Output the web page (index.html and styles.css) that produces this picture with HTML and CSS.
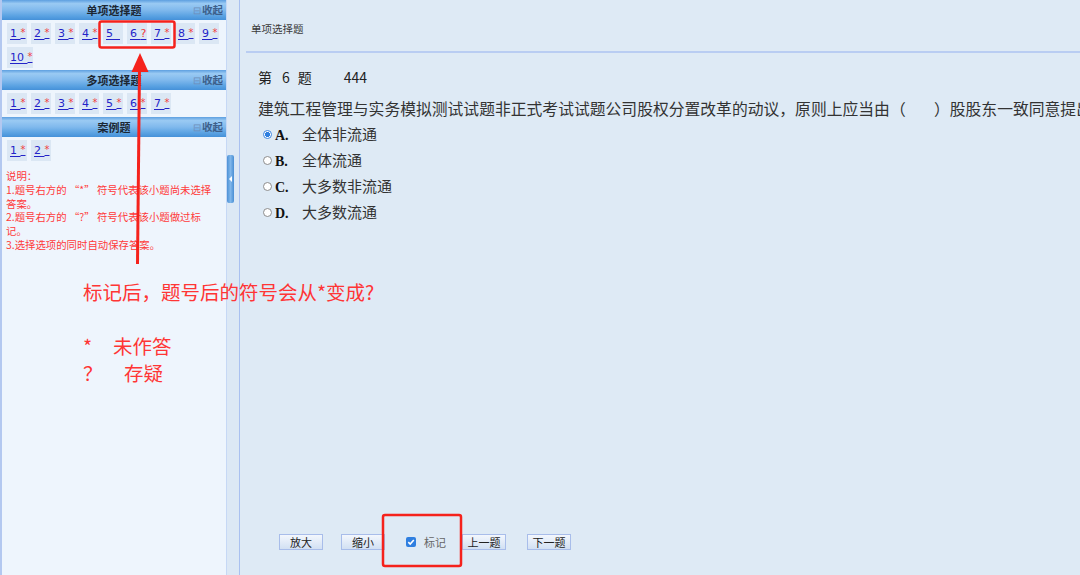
FILE: index.html
```html
<!DOCTYPE html>
<html lang="zh-CN">
<head>
<meta charset="utf-8">
<title>单项选择题</title>
<link rel="stylesheet" href="styles.css">
</head>
<body>
<div class="page">
  <aside class="side">
    <section class="group">
      <div class="group-head"><span class="group-title">单项选择题</span><span class="fold"><span class="fold-ico">⊟</span>收起</span></div>
      <div class="nums">
        <a class="num">1 <span class="star">*</span></a>
        <a class="num">2 <span class="star">*</span></a>
        <a class="num">3 <span class="star">*</span></a>
        <a class="num">4 <span class="star">*</span></a>
        <a class="num">5&nbsp;&nbsp;</a>
        <a class="num">6 <span class="qm">?</span></a>
        <a class="num">7 <span class="star">*</span></a>
        <a class="num">8 <span class="star">*</span></a>
        <a class="num">9 <span class="star">*</span></a>
        <a class="num">10 <span class="star">*</span></a>
      </div>
    </section>
    <section class="group">
      <div class="group-head"><span class="group-title">多项选择题</span><span class="fold"><span class="fold-ico">⊟</span>收起</span></div>
      <div class="nums">
        <a class="num">1 <span class="star">*</span></a>
        <a class="num">2 <span class="star">*</span></a>
        <a class="num">3 <span class="star">*</span></a>
        <a class="num">4 <span class="star">*</span></a>
        <a class="num">5 <span class="star">*</span></a>
        <a class="num">6 <span class="star">*</span></a>
        <a class="num">7 <span class="star">*</span></a>
      </div>
    </section>
    <section class="group">
      <div class="group-head"><span class="group-title">案例题</span><span class="fold"><span class="fold-ico">⊟</span>收起</span></div>
      <div class="nums">
        <a class="num">1 <span class="star">*</span></a>
        <a class="num">2 <span class="star">*</span></a>
      </div>
    </section>
    <div class="note">
      <p>说明：</p>
      <p>1.题号右方的 “*” 符号代表该小题尚未选择答案。</p>
      <p>2.题号右方的 “?” 符号代表该小题做过标记。</p>
      <p>3.选择选项的同时自动保存答案。</p>
    </div>
  </aside>

  <div class="splitter"><div class="handle"><span class="handle-arrow"></span></div></div>

  <main class="main">
    <div class="crumb">单项选择题</div>
    <div class="qhead"><span>第</span><span class="qno">6</span><span>题</span><span class="qcode">444</span></div>
    <div class="qtext">建筑工程管理与实务模拟测试试题非正式考试试题公司股权分置改革的动议，原则上应当由（&nbsp;&nbsp;&nbsp;&nbsp;&nbsp;&nbsp;&nbsp;&nbsp;）股股东一致同意提出</div>
    <ul class="opts">
      <li class="opt"><span class="radio checked"></span><span class="letter">A.</span><span>全体非流通</span></li>
      <li class="opt"><span class="radio"></span><span class="letter">B.</span><span>全体流通</span></li>
      <li class="opt"><span class="radio"></span><span class="letter">C.</span><span>大多数非流通</span></li>
      <li class="opt"><span class="radio"></span><span class="letter">D.</span><span>大多数流通</span></li>
    </ul>
    <div class="bar">
      <button class="btn">放大</button>
      <button class="btn btn-gap">缩小</button>
      <label class="mark"><span class="check"><svg viewBox="0 0 10 10" width="10" height="10"><path d="M2.3 5.2 L4.2 7 L7.8 3" fill="none" stroke="#fff" stroke-width="1.6"/></svg></span><span class="mark-text">标记</span></label>
      <button class="btn btn-gap">上一题</button>
      <button class="btn">下一题</button>
    </div>
  </main>

  <div class="annot">
    <svg class="annot-svg" width="1080" height="575" viewBox="0 0 1080 575">
      <rect x="99.5" y="21.5" width="75" height="26" rx="2" fill="none" stroke="#f5221c" stroke-width="2.5"/>
      <rect x="383" y="515" width="78" height="51" rx="2" fill="none" stroke="#f5221c" stroke-width="2.5"/>
      <line x1="137.5" y1="264" x2="139.5" y2="68" stroke="#f5221c" stroke-width="3"/>
      <polygon points="140,53 131.5,72 148.5,72" fill="#f5221c"/>
    </svg>
    <div class="annot-text annot-main">标记后，题号后的符号会从*变成?</div>
    <div class="annot-text annot-l1"><span class="sym">*</span>未作答</div>
    <div class="annot-text annot-l2"><span class="sym2">？</span>存疑</div>
  </div>
</div>
</body>
</html>
```

FILE: styles.css
```css
* { box-sizing: border-box; }
html, body { margin: 0; padding: 0; }
body {
  width: 1080px;
  height: 575px;
  overflow: hidden;
  font-family: "Noto Sans CJK SC", "Liberation Sans", sans-serif;
  background: #dfeaf5;
}
.page {
  position: relative;
  display: flex;
  width: 1080px;
  height: 575px;
}

/* ---------- side panel ---------- */
.side {
  width: 227px;
  flex: none;
  background: #eef5fd;
  border-left: 2px solid #b3c8f0;
  border-right: 1px solid #c6d8f5;
}
.group-head {
  position: relative;
  height: 20px;
  display: flex;
  align-items: center;
  justify-content: center;
  background: linear-gradient(to bottom, #5d9fe0 0%, #9acaf3 18%, #80b9ed 50%, #5aa2e2 80%, #4591d9 100%);
}
.group-title {
  font-size: 11px;
  font-weight: bold;
  color: #1c2733;
  line-height: 20px;
}
.fold {
  position: absolute;
  right: 3px;
  top: 0;
  line-height: 20px;
  font-size: 10.5px;
  font-weight: bold;
  color: #3d5f8a;
}
.fold-ico {
  color: #6f8fba;
  font-weight: normal;
  font-size: 10px;
  margin-right: 1px;
}
.nums {
  display: flex;
  flex-wrap: wrap;
  gap: 3px 4px;
  padding: 3px 0 2px 5px;
}
.num {
  display: flex;
  align-items: flex-start;
  min-width: 20px;
  height: 21px;
  padding: 3px 0 0 3px;
  background: #dbe7f4;
  color: #2323c8;
  text-decoration: underline;
  text-underline-offset: 2px;
  font-family: "DejaVu Sans", "Liberation Sans", sans-serif;
  font-size: 11px;
  line-height: 15px;
  white-space: pre;
}
.group + .group .nums { padding-bottom: 3px; }
.star {
  color: #f03c3c;
  font-size: 10px;
  line-height: 13px;
}
.qm {
  color: #f03c3c;
  font-size: 11px;
}
.note {
  padding: 5px 4px 0 4px;
  width: 218px;
  color: #ff3a3a;
  font-size: 10.4px;
  line-height: 13.8px;
}
.note p { margin: 0; }

/* ---------- splitter ---------- */
.splitter {
  width: 13px;
  flex: none;
  border-right: 1px solid #a9c0f0;
  background: #dce8f5;
  padding-top: 155px;
}
.handle {
  position: relative;
  width: 7px;
  height: 48px;
  border-radius: 2px;
  background: linear-gradient(to right, #4e92d6, #7fb6ea 50%, #4a8fd4);
}
.handle-arrow {
  position: absolute;
  left: 2px;
  top: 21px;
  width: 0;
  height: 0;
  border-top: 3px solid transparent;
  border-bottom: 3px solid transparent;
  border-right: 3px solid #ffffff;
}

/* ---------- main ---------- */
.main {
  flex: 1;
  min-width: 0;
  display: flex;
  flex-direction: column;
  overflow: hidden;
  padding-left: 6px;
  background: #deeaf5;
}
.crumb {
  height: 53px;
  padding: 22px 0 0 5px;
  font-size: 10.5px;
  line-height: 14px;
  color: #3a3a3a;
  border-bottom: 2px solid #b9cdf2;
}
.qhead {
  margin: 14px 0 0 12px;
  font-size: 14px;
  line-height: 20px;
  color: #222;
  display: flex;
}
.qno { margin: 0 8px 0 10px; }
.qcode { margin-left: 32px; }
.qtext {
  margin: 11px 0 0 12px;
  font-size: 15.8px;
  line-height: 22px;
  color: #333;
  white-space: nowrap;
}
.opts {
  list-style: none;
  margin: 1px 0 0 17px;
  padding: 0;
}
.opt {
  display: flex;
  align-items: baseline;
  height: 26px;
  line-height: 26px;
  font-size: 15px;
  color: #333;
}
.radio {
  align-self: center;
  width: 9px;
  height: 9px;
  border-radius: 50%;
  border: 1px solid #8d8d8d;
  background: #fff;
  margin-right: 3px;
  flex: none;
}
.radio.checked {
  border-color: #3f86e0;
  background: radial-gradient(circle, #2f7fe0 0 2.3px, #fff 2.8px);
}
.letter {
  width: 27px;
  font-family: "Liberation Serif", serif;
  font-weight: bold;
  font-size: 14px;
  color: #111;
  flex: none;
}
.bar {
  margin-top: auto;
  margin-bottom: 25px;
  padding-left: 33px;
  display: flex;
  align-items: center;
  height: 17px;
}
.btn {
  height: 16px;
  padding: 0;
  width: 44px;
  border: 1px solid #a8bdea;
  background: linear-gradient(to bottom, #f3f7fd, #d2e0f3);
  font-family: "Noto Sans CJK SC", sans-serif;
  font-size: 11px;
  line-height: 14px;
  color: #222;
  margin-right: 18px;
}
.btn-gap { margin-right: 21px; }
.mark {
  display: flex;
  align-items: center;
  margin-right: 16px;
}
.check {
  width: 10px;
  height: 10px;
  border-radius: 2px;
  background: #2f7fe0;
  display: flex;
  margin-right: 8px;
}
.mark-text {
  font-size: 11px;
  color: #666;
}
.bar .btn:last-child { margin-right: 0; }

/* ---------- annotations (overlay) ---------- */
.annot {
  position: absolute;
  left: 0;
  top: 0;
  width: 1080px;
  height: 575px;
  pointer-events: none;
}
.annot-svg { position: absolute; left: 0; top: 0; }
.annot-text {
  position: absolute;
  left: 83px;
  color: #ff3535;
  font-size: 19.5px;
  line-height: 24px;
  white-space: nowrap;
}
.annot-main { top: 280px; }
.annot-l1 { top: 334px; }
.annot-l2 { top: 361px; }
.sym { display: inline-block; width: 30px; }
.sym2 { display: inline-block; width: 41px; }
```
